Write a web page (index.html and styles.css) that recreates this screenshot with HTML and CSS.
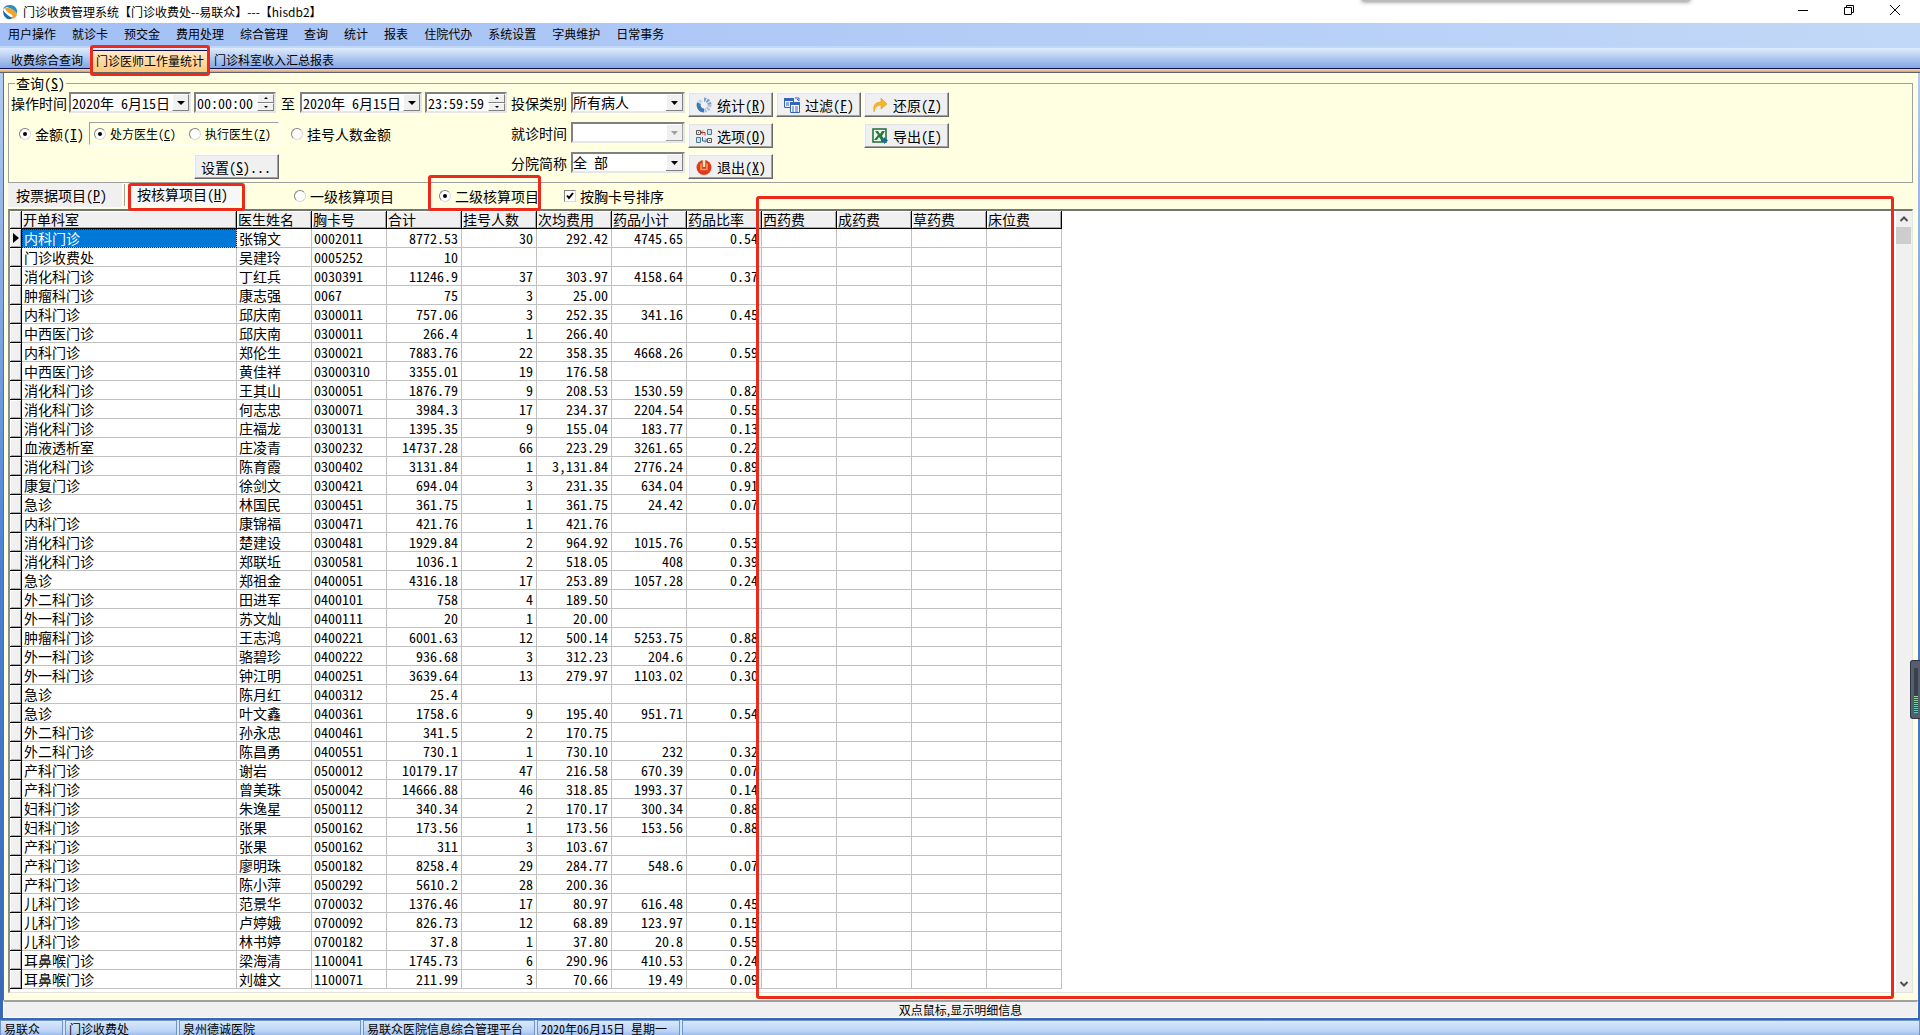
FILE: index.html
```html
<!DOCTYPE html>
<html lang="zh-CN">
<head>
<meta charset="utf-8">
<title>门诊收费管理系统</title>
<link rel="stylesheet" href="styles.css">
</head>
<body>
<header class="titlebar">
  <svg class="app-icon" width="16" height="16" viewBox="0 0 16 16"><path d="M1 6Q2 1 8 1Q13 1 15 6V10Q12 5 5 3Q2 4 1 6Z" fill="#2590c8"/><path d="M1 6Q4 11 11 14Q6 17 3 13Q1 11 1 6Z" fill="#1a6fa5"/><path d="M3 4Q6 3 10 5Q15 8 15 11Q13 15 9 15Q12 12 9 10Q4 8 3 4Z" fill="#f2a231"/></svg>
  <h1>门诊收费管理系统【门诊收费处--易联众】---【hisdb2】</h1>
  <div class="window-buttons">
    <button aria-label="最小化"><svg width="12" height="12"><path d="M1 6.500h10" stroke="#000"/></svg></button>
    <button aria-label="还原"><svg width="12" height="12" fill="none" stroke="#000"><path d="M1.500 3.500h7v7h-7zM3.500 3.500v-2h7v7h-2"/></svg></button>
    <button aria-label="关闭"><svg width="12" height="12"><path d="M1 1l10 10M11 1L1 11" stroke="#000"/></svg></button>
  </div>
  <div class="top-shadow"></div>
</header>
<nav class="menubar">
  <a href="#">用户操作</a><a href="#">就诊卡</a><a href="#">预交金</a><a href="#">费用处理</a><a href="#">综合管理</a><a href="#">查询</a><a href="#">统计</a><a href="#">报表</a><a href="#">住院代办</a><a href="#">系统设置</a><a href="#">字典维护</a><a href="#">日常事务</a>
</nav>
<nav class="doc-tabs">
  <a href="#">收费综合查询</a><a href="#" class="active marked">门诊医师工作量统计</a><a href="#">门诊科室收入汇总报表</a>
</nav>
<main class="workspace">
  <fieldset class="query">
    <legend>查询(<u>S</u>)</legend>
    <div class="query-body">
      <div class="conditions">
        <div class="row">
          <label for="d1">操作时间</label>
          <div class="pair">
            <div class="box date"><input id="d1" type="text" value="2020年 6月15日"><button class="drop" aria-label="选择日期"></button></div>
            <div class="box time"><input type="text" aria-label="开始时间" value="00:00:00"><div class="spin"><button class="up" aria-label="增加"></button><button class="down" aria-label="减少"></button></div></div>
          </div>
          <label for="d2" class="to">至</label>
          <div class="pair">
            <div class="box date"><input id="d2" type="text" value="2020年 6月15日"><button class="drop" aria-label="选择日期"></button></div>
            <div class="box time"><input type="text" aria-label="结束时间" value="23:59:59"><div class="spin"><button class="up" aria-label="增加"></button><button class="down" aria-label="减少"></button></div></div>
          </div>
        </div>
        <div class="row modes">
          <label class="opt"><input type="radio" name="mode" checked><span>金额(<u>I</u>)</span></label>
          <div class="sub-modes">
            <label class="opt"><input type="radio" name="doctor" checked><span>处方医生(<u>C</u>)</span></label>
            <label class="opt"><input type="radio" name="doctor"><span>执行医生(<u>Z</u>)</span></label>
          </div>
          <label class="opt"><input type="radio" name="mode">挂号人数金额</label>
        </div>
        <button class="btn settings"><span>设置(<u>S</u>)...</span></button>
      </div>
      <div class="filters">
        <label for="ins">投保类别</label><select id="ins"><option>所有病人</option></select>
        <label for="vis">就诊时间</label><select id="vis" disabled><option></option></select>
        <label for="hos">分院简称</label><select id="hos"><option>全 部</option></select>
      </div>
      <div class="actions">
        <button class="btn"><svg width="16" height="16" viewBox="0 0 16 16" fill="none" stroke-width="4"><path d="M8 2.500a5.500 5.500 0 0 1 5.500 5.500" stroke="#7aa0d0" stroke-dasharray="2 1"/><path d="M13.500 8a5.500 5.500 0 0 1-5.500 5.500" stroke="#a9c2e2" stroke-dasharray="2 1"/><path d="M8 13.500A5.500 5.500 0 0 1 3 6" stroke="#3a78b8"/><path d="M3 6l2-3" stroke="#c8d8ec"/></svg><span>统计(<u>R</u>)</span></button>
        <button class="btn"><svg width="16" height="16" viewBox="0 0 16 16"><path d="M.5 1.500h9v9h-9z" fill="#e8f0ff" stroke="#3465b8"/><path d="M0 1h10v3H0z" fill="#3465b8"/><path d="M2 6h3M2 8h3" stroke="#3465b8"/><path d="M6.500 6.500h9v9h-9z" fill="#fff" stroke="#3465b8"/><path d="M6 5h10v3H6z" fill="#3465b8"/><path d="M8 10h2M11 10h3M8 12h2M11 12h3M8 14h2M11 14h3" stroke="#3465b8"/><path d="M11 1h4v3M13 2l2 2" stroke="#3465b8" fill="none"/></svg><span>过滤(<u>F</u>)</span></button>
        <button class="btn"><svg width="16" height="16" viewBox="0 0 16 16"><path d="M2 15Q0 5 9 5V1l6 6-6 5V8Q3 8 2 15z" fill="#f8b52a" stroke="#e79c10" stroke-width=".6"/></svg><span>还原(<u>Z</u>)</span></button>
        <button class="btn"><svg width="16" height="16" viewBox="0 0 16 16" fill="none"><path d="M.5 2.500h4v4h-4zM11.500 10.500h4v4h-4z" stroke="#555"/><path d="M2 4.500h1M13 12.500h1" stroke="#555"/><path d="M11.500 1.500h4v5h-4zM.5 9.500h4v5h-4z" fill="#bfe6f5" stroke="#56788a"/><path d="M5 4.500h4v3M7 2.500l-2 2 2 2" stroke="#b5382c"/><path d="M6.500 9v4h4M9 10.500l2 2-2 2" stroke="#2b6593"/></svg><span>选项(<u>O</u>)</span></button>
        <button class="btn export"><svg width="16" height="16" viewBox="0 0 16 16"><path d="M1 1h13v13H1z" fill="#eef7ee" stroke="#1f6b35" stroke-width="1.500"/><path d="M3 3h3l2 3 2-3h3l-3 5 3 4H9L7 9l-2 3H2l4-5z" fill="#227a3b"/><path d="M9 11h3V9l4 3.500-4 3.500v-2H9z" fill="#176a9e"/></svg><span>导出(<u>E</u>)</span></button>
        <button class="btn quit"><svg width="16" height="16" viewBox="0 0 16 16"><circle cx="8" cy="8.500" r="7.500" fill="#dc3b1c"/><path d="M5 4.500v6h6v-6" fill="none" stroke="#f79a5c" stroke-width="1.500"/><path d="M8 0v8" stroke="#ffe9c9" stroke-width="2.500"/></svg><span>退出(<u>X</u>)</span></button>
      </div>
    </div>
  </fieldset>
  <div class="item-tabs">
    <button class="item-tab">按票据项目(<u>P</u>)</button>
    <span class="divider"></span>
    <button class="item-tab current marked">按核算项目(<u>H</u>)</button>
    <label class="opt level1"><input type="radio" name="level">一级核算项目</label>
    <label class="opt level2 marked"><input type="radio" name="level" checked>二级核算项目</label>
    <label class="opt sort"><input type="checkbox" checked>按胸卡号排序</label>
  </div>
  <section class="grid-frame">
    <div class="grid-area">
    <table class="grid">
      <colgroup><col class="c-mark"><col class="c-dept"><col span="11" class="c-data"></colgroup>
      <thead><tr><th></th><th>开单科室</th><th>医生姓名</th><th>胸卡号</th><th>合计</th><th>挂号人数</th><th>次均费用</th><th>药品小计</th><th>药品比率</th><th>西药费</th><th>成药费</th><th>草药费</th><th>床位费</th></tr></thead>
      <tbody>
<tr class="selected"><th><td>内科门诊<td>张锦文<td>0002011<td>8772.53<td>30<td>292.42<td>4745.65<td>0.54<td><td><td><td>
<tr><th><td>门诊收费处<td>吴建玲<td>0005252<td>10<td><td><td><td><td><td><td><td>
<tr><th><td>消化科门诊<td>丁红兵<td>0030391<td>11246.9<td>37<td>303.97<td>4158.64<td>0.37<td><td><td><td>
<tr><th><td>肿瘤科门诊<td>康志强<td>0067<td>75<td>3<td>25.00<td><td><td><td><td><td>
<tr><th><td>内科门诊<td>邱庆南<td>0300011<td>757.06<td>3<td>252.35<td>341.16<td>0.45<td><td><td><td>
<tr><th><td>中西医门诊<td>邱庆南<td>0300011<td>266.4<td>1<td>266.40<td><td><td><td><td><td>
<tr><th><td>内科门诊<td>郑伦生<td>0300021<td>7883.76<td>22<td>358.35<td>4668.26<td>0.59<td><td><td><td>
<tr><th><td>中西医门诊<td>黄佳祥<td>03000310<td>3355.01<td>19<td>176.58<td><td><td><td><td><td>
<tr><th><td>消化科门诊<td>王其山<td>0300051<td>1876.79<td>9<td>208.53<td>1530.59<td>0.82<td><td><td><td>
<tr><th><td>消化科门诊<td>何志忠<td>0300071<td>3984.3<td>17<td>234.37<td>2204.54<td>0.55<td><td><td><td>
<tr><th><td>消化科门诊<td>庄福龙<td>0300131<td>1395.35<td>9<td>155.04<td>183.77<td>0.13<td><td><td><td>
<tr><th><td>血液透析室<td>庄凌青<td>0300232<td>14737.28<td>66<td>223.29<td>3261.65<td>0.22<td><td><td><td>
<tr><th><td>消化科门诊<td>陈育霞<td>0300402<td>3131.84<td>1<td>3,131.84<td>2776.24<td>0.89<td><td><td><td>
<tr><th><td>康复门诊<td>徐剑文<td>0300421<td>694.04<td>3<td>231.35<td>634.04<td>0.91<td><td><td><td>
<tr><th><td>急诊<td>林国民<td>0300451<td>361.75<td>1<td>361.75<td>24.42<td>0.07<td><td><td><td>
<tr><th><td>内科门诊<td>康锦福<td>0300471<td>421.76<td>1<td>421.76<td><td><td><td><td><td>
<tr><th><td>消化科门诊<td>楚建设<td>0300481<td>1929.84<td>2<td>964.92<td>1015.76<td>0.53<td><td><td><td>
<tr><th><td>消化科门诊<td>郑联坵<td>0300581<td>1036.1<td>2<td>518.05<td>408<td>0.39<td><td><td><td>
<tr><th><td>急诊<td>郑祖金<td>0400051<td>4316.18<td>17<td>253.89<td>1057.28<td>0.24<td><td><td><td>
<tr><th><td>外二科门诊<td>田进军<td>0400101<td>758<td>4<td>189.50<td><td><td><td><td><td>
<tr><th><td>外一科门诊<td>苏文灿<td>0400111<td>20<td>1<td>20.00<td><td><td><td><td><td>
<tr><th><td>肿瘤科门诊<td>王志鸿<td>0400221<td>6001.63<td>12<td>500.14<td>5253.75<td>0.88<td><td><td><td>
<tr><th><td>外一科门诊<td>骆碧珍<td>0400222<td>936.68<td>3<td>312.23<td>204.6<td>0.22<td><td><td><td>
<tr><th><td>外一科门诊<td>钟江明<td>0400251<td>3639.64<td>13<td>279.97<td>1103.02<td>0.30<td><td><td><td>
<tr><th><td>急诊<td>陈月红<td>0400312<td>25.4<td><td><td><td><td><td><td><td>
<tr><th><td>急诊<td>叶文鑫<td>0400361<td>1758.6<td>9<td>195.40<td>951.71<td>0.54<td><td><td><td>
<tr><th><td>外二科门诊<td>孙永忠<td>0400461<td>341.5<td>2<td>170.75<td><td><td><td><td><td>
<tr><th><td>外二科门诊<td>陈昌勇<td>0400551<td>730.1<td>1<td>730.10<td>232<td>0.32<td><td><td><td>
<tr><th><td>产科门诊<td>谢岩<td>0500012<td>10179.17<td>47<td>216.58<td>670.39<td>0.07<td><td><td><td>
<tr><th><td>产科门诊<td>曾美珠<td>0500042<td>14666.88<td>46<td>318.85<td>1993.37<td>0.14<td><td><td><td>
<tr><th><td>妇科门诊<td>朱逸星<td>0500112<td>340.34<td>2<td>170.17<td>300.34<td>0.88<td><td><td><td>
<tr><th><td>妇科门诊<td>张果<td>0500162<td>173.56<td>1<td>173.56<td>153.56<td>0.88<td><td><td><td>
<tr><th><td>产科门诊<td>张果<td>0500162<td>311<td>3<td>103.67<td><td><td><td><td><td>
<tr><th><td>产科门诊<td>廖明珠<td>0500182<td>8258.4<td>29<td>284.77<td>548.6<td>0.07<td><td><td><td>
<tr><th><td>产科门诊<td>陈小萍<td>0500292<td>5610.2<td>28<td>200.36<td><td><td><td><td><td>
<tr><th><td>儿科门诊<td>范景华<td>0700032<td>1376.46<td>17<td>80.97<td>616.48<td>0.45<td><td><td><td>
<tr><th><td>儿科门诊<td>卢婷娥<td>0700092<td>826.73<td>12<td>68.89<td>123.97<td>0.15<td><td><td><td>
<tr><th><td>儿科门诊<td>林书婷<td>0700182<td>37.8<td>1<td>37.80<td>20.8<td>0.55<td><td><td><td>
<tr><th><td>耳鼻喉门诊<td>梁海清<td>1100041<td>1745.73<td>6<td>290.96<td>410.53<td>0.24<td><td><td><td>
<tr><th><td>耳鼻喉门诊<td>刘雄文<td>1100071<td>211.99<td>3<td>70.66<td>19.49<td>0.09<td><td><td><td>
      </tbody>
    </table>
    </div>
    <div class="scrollbar">
      <svg width="16" height="16" fill="none" stroke="#505050" stroke-width="2"><path d="M4.500 10L8 6.500l3.500 3.500"/></svg>
      <div class="thumb"></div>
      <svg class="scroll-down" width="16" height="16" fill="none" stroke="#505050" stroke-width="2"><path d="M4.500 6L8 9.500L11.500 6"/></svg>
    </div>
    <div class="cost-outline"></div>
  </section>
</main>
<div class="hint">双点鼠标,显示明细信息</div>
<footer class="statusbar"><span class="s-user">易联众</span><span class="s-dept">门诊收费处</span><span class="s-hospital">泉州德诚医院</span><span class="s-system">易联众医院信息综合管理平台</span><span class="s-date">2020年06月15日 星期一</span><span class="s-rest"></span></footer>
<div class="meter"><div class="bars"></div></div>
</body>
</html>
```
FILE: styles.css
```css
* { box-sizing: border-box; }

body {
  margin: 0;
  min-height: 100vh;
  display: flex;
  flex-direction: column;
  font: 14px/18px "Noto Sans CJK SC", sans-serif;
  font-feature-settings: "hwid";
  color: #000;
  background: linear-gradient(#c0d8f8, #8caee8 25%, #4a80d4 55%, #3867b5);
}

a { color: inherit; text-decoration: none; }
button, input, select {
  font: inherit;
  font-feature-settings: inherit;
  color: inherit;
  margin: 0;
  padding: 0;
  border: 0;
  border-radius: 0;
}
u { text-underline-offset: 1px; }

/* Title bar */
.titlebar {
  position: relative;
  display: flex;
  align-items: center;
  height: 23px;
  padding-left: 2px;
  background: #fff;
}
.titlebar h1 {
  flex: 1;
  margin: 0 0 0 5px;
  font-size: 12px;
  font-weight: 400;
  font-feature-settings: normal;
}
.window-buttons { display: flex; gap: 34px; padding: 0 19px 3px 0; }
.window-buttons button { display: flex; background: none; }
.top-shadow {
  position: absolute;
  top: -4px;
  right: 230px;
  width: 328px;
  height: 5px;
  background: #bbb;
  box-shadow: 0 1px 4px #888;
}

/* Menus and document tabs */
.menubar {
  display: flex;
  gap: 16px;
  height: 23px;
  padding: 2px 8px;
  font-size: 12px;
  background: linear-gradient(90deg, #a2c0f5, #c2d8f8);
}
.doc-tabs {
  display: flex;
  align-items: flex-start;
  height: 27px;
  padding: 2px 0 0 2px;
  font-size: 12px;
  background:
    linear-gradient(#c0d8f8 2px, #deebfc 2px, #84a6e4 22px, #10104c 22px, #10104c 23px, #e6d0d4 23px, #e6d0d4 24px, #f0c896 24px, #c9a272 26px, #606468 26px);
}
.doc-tabs a { height: 20px; padding: 0 9px; line-height: 24px; }
.doc-tabs .active {
  height: 22px;
  margin-top: 2px;
  padding: 0 4px;
  line-height: 19px;
  background: linear-gradient(#ffeacb, #ffc878);
  border-top: 1px solid #10104c;
}
.doc-tabs a:last-child { padding-left: 6px; }

/* Red frames that call attention to a control */
.marked { position: relative; }
.marked::after, .cost-outline {
  content: "";
  position: absolute;
  z-index: 2;
  border: 3px solid #ec2a1c;
  border-radius: 3px;
  pointer-events: none;
}
.doc-tabs .marked::after { inset: -6px -2px -4px; }

/* Workspace */
.workspace {
  flex: 1;
  display: flex;
  flex-direction: column;
  margin: 0 2px 0 3px;
  padding: 2px 4px 7px;
  background: #ffffe1;
  border-left: 1px solid #696969;
  border-right: 1px solid #fff;
}
.query {
  min-width: 0;
  margin: 0;
  padding: 1px 2px 3px;
  border: 1px solid #a0a0a0;
}
.query legend { height: 16px; margin-left: 4px; padding: 0 1px; line-height: 16px; }
.query-body { display: flex; gap: 3px; }
.conditions { display: flex; flex-direction: column; gap: 9px; width: 497px; }
.row { display: flex; align-items: center; gap: 2px; height: 21px; white-space: nowrap; }
.to { margin: 0 3px; }
.pair { display: flex; gap: 3px; }
.box, select {
  display: flex;
  height: 21px;
  background: #fff;
  border: 2px solid;
  border-color: #808080 #e6e6e6 #e6e6e6 #808080;
}
.box input { flex: 1; min-width: 0; padding-left: 1px; background: none; }
.date { width: 122px; }
.time { width: 82px; }
.drop, .spin button {
  background: #f0f0f0 center no-repeat;
  border: 1px solid;
  border-color: #fff #808080 #808080 #fff;
}
.drop {
  width: 17px;
  background-image: url("data:image/svg+xml,%3Csvg xmlns='http://www.w3.org/2000/svg' width='8' height='4'%3E%3Cpath d='M0 0h8L4 4z'/%3E%3C/svg%3E");
}
.spin { display: flex; flex-direction: column; width: 17px; }
.spin button { flex: 1; }
.spin .up { background-image: url("data:image/svg+xml,%3Csvg xmlns='http://www.w3.org/2000/svg' width='4' height='2'%3E%3Cpath d='M0 2h4L2 0z'/%3E%3C/svg%3E"); }
.spin .down { background-image: url("data:image/svg+xml,%3Csvg xmlns='http://www.w3.org/2000/svg' width='4' height='2'%3E%3Cpath d='M0 0h4L2 2z'/%3E%3C/svg%3E"); }

.modes { height: 23px; padding-left: 8px; gap: 0; }
.sub-modes {
  display: flex;
  align-items: center;
  gap: 13px;
  width: 190px;
  height: 23px;
  margin: 0 12px 0 5px;
  padding-left: 4px;
  font-size: 12px;
  border: 1px solid;
  border-color: #a0a0a0 #fffff6 #fffff6 #a0a0a0;
}
.opt { display: flex; align-items: center; gap: 4px; white-space: nowrap; }
.opt input {
  appearance: none;
  display: grid;
  place-items: center;
  width: 12px;
  height: 12px;
  background: #fff;
  border: 1px solid;
  border-color: #808080 #d8d8d8 #d8d8d8 #808080;
}
.opt input[type="radio"] { border-radius: 50%; }
.opt input[type="radio"]:checked::before {
  content: "";
  width: 4px;
  height: 4px;
  border-radius: 50%;
  background: #000;
}
.opt input[type="checkbox"]:checked {
  background: #fff url("data:image/svg+xml,%3Csvg xmlns='http://www.w3.org/2000/svg' width='10' height='10'%3E%3Cpath d='M2 4.500l2 2.500l4-5' fill='none' stroke='%23000' stroke-width='2'/%3E%3C/svg%3E") center no-repeat;
}

.btn {
  display: flex;
  align-items: center;
  gap: 5px;
  width: 85px;
  height: 25px;
  padding-left: 7px;
  white-space: nowrap;
  background: #f0f0f0;
  border: 1px solid;
  border-color: #fff #696969 #696969 #fff;
  box-shadow: inset -1px -1px #a0a0a0, inset 1px 1px #e3e3e3;
}
.settings { margin-left: 183px; padding-left: 6px; }

.filters {
  display: grid;
  grid-template-columns: 57px 114px;
  grid-auto-rows: 21px;
  gap: 9px 3px;
  align-items: center;
}
select {
  appearance: none;
  width: 100%;
  line-height: 17px;
  background: #fff url("data:image/svg+xml,%3Csvg xmlns='http://www.w3.org/2000/svg' width='17' height='17'%3E%3Cpath fill='%23808080' d='M0 0h17v17H0z'/%3E%3Cpath fill='%23fff' d='M0 0h16v16H0z'/%3E%3Cpath fill='%23f0f0f0' d='M1 1h15v15H1z'/%3E%3Cpath d='M5 7h7L8.500 11z'/%3E%3C/svg%3E") right center no-repeat;
}
select:disabled {
  opacity: 1;
  background-image: url("data:image/svg+xml,%3Csvg xmlns='http://www.w3.org/2000/svg' width='17' height='17'%3E%3Cpath fill='%23a0a0a0' d='M0 0h17v17H0z'/%3E%3Cpath fill='%23fff' d='M0 0h16v16H0z'/%3E%3Cpath fill='%23f0f0f0' d='M1 1h15v15H1z'/%3E%3Cpath fill='%23a0a0a0' d='M5 7h7L8.500 11z'/%3E%3C/svg%3E");
}
.actions {
  display: grid;
  grid-template-columns: repeat(3, 85px);
  grid-auto-rows: 25px;
  gap: 6px 3px;
}
.export { grid-column: 3; }
.quit { grid-column: 1; }

/* Item tabs */
.item-tabs { display: flex; height: 26px; }
.item-tab {
  width: 114px;
  height: 24px;
  padding: 0 0 0 8px;
  text-align: left;
  white-space: nowrap;
  background: #f0f0f0;
}
.divider { width: 1px; height: 22px; margin: 1px 5px 0 2px; background: #a0a0a0; }
.item-tab.current { width: 110px; height: 22px; padding-left: 7px; background: #f7f7f7; }
.item-tab.marked::after { inset: 0 -5px -6px -2px; }
.level1 { margin-left: 54px; }
.level2 { margin-left: 45px; }
.level2::after { inset: -8px -2px -2px -11px; }
.sort { margin-left: 25px; }

/* Result grid */
.grid-frame {
  position: relative;
  flex: 1;
  display: flex;
  background: #fff;
  border: 2px solid;
  border-color: #747470 #e3e3e3 #e3e3e3 #8c8c88;
  border-right-width: 1px;
  border-bottom-width: 1px;
}
.grid-area { flex: 1; min-width: 0; }
.grid {
  width: 1052px;
  table-layout: fixed;
  border-collapse: separate;
  border-spacing: 0;
}
.c-mark { width: 12px; }
.c-dept { width: 215px; }
.c-data { width: 75px; }
.grid th {
  height: 18px;
  padding: 0 0 0 1px;
  line-height: 17px;
  font-weight: 400;
  text-align: left;
  white-space: nowrap;
  background: #f0f0f0;
  border-right: 1px solid #000;
  border-bottom: 1px solid #000;
  box-shadow: inset 1px 1px #fff, inset -1px -1px #a8a8a8;
}
.grid tbody th { height: 19px; }
.grid td {
  height: 19px;
  padding: 0 3px 0 2px;
  line-height: 18px;
  white-space: nowrap;
  border-right: 1px solid #c0c0c0;
  border-bottom: 1px solid #c0c0c0;
}
.grid td:nth-child(n+5) { text-align: right; }
.selected td:nth-child(2) { color: #fff; background: #0078d7; outline: 1px dotted #222; outline-offset: -1px; }
.selected th::before {
  content: "";
  display: block;
  width: 0;
  margin-left: 2px;
  border: 5px solid transparent;
  border-left: 6px solid #000;
  border-right: 0;
}

.scrollbar { display: flex; flex-direction: column; width: 16px; background: #f0f0f0; }
.thumb { width: 15px; height: 17px; background: #cdcdcd; }
.scroll-down { margin-top: auto; }
.cost-outline { inset: -15px 18px -7px 746px; }

/* Bottom bars */
.hint {
  height: 18px;
  margin: 0 2px 0 3px;
  border: 1px solid #fff;
  border-top: 2px solid #a0a0a0;
  font-size: 12px;
  line-height: 15px;
  text-align: center;
  font-feature-settings: normal;
  background: #f0f0f0;
}
.statusbar {
  display: flex;
  gap: 2px;
  height: 17px;
  border-top: 2px solid #3867b5;
  font-size: 12px;
  line-height: 16px;
  white-space: nowrap;
  background: #d0e4fa;
}
.statusbar span {
  padding-left: 3px;
  background: linear-gradient(#d8e8fc, #bcd4f6 10px, #9cbcf0);
  border: 1px solid #6f95c8;
  border-bottom: 0;
}
.s-user { width: 63px; }
.s-dept { width: 112px; }
.s-hospital { width: 182px; }
.s-system { width: 172px; }
.s-date { width: 143px; }
.s-rest { flex: 1; }

/* Level meter docked to the screen edge */
.meter {
  position: fixed;
  top: 660px;
  right: 0;
  width: 10px;
  height: 59px;
  padding: 7px 2px 0 3px;
  background: #565d6e;
  border: 1px solid #2e3440;
  border-right: 0;
  border-radius: 3px 0 0 3px;
}
.bars {
  height: 45px;
  background:
    repeating-linear-gradient(transparent 0 1px, #3b404d 1px 2px),
    linear-gradient(#3b404d 27px, #a8d890 27px, #5cd0c4);
}
```
